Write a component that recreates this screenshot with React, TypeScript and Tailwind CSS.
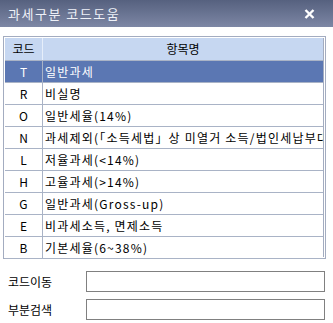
import React from "react";

const rows = [
  { code: "T", name: "일반과세" },
  { code: "R", name: "비실명" },
  { code: "O", name: "일반세율(14%)" },
  { code: "N", name: "과세제외(「소득세법」상 미열거 소득/법인세납부대상)" },
  { code: "L", name: "저율과세(<14%)" },
  { code: "H", name: "고율과세(>14%)" },
  { code: "G", name: "일반과세(Gross-up)" },
  { code: "E", name: "비과세소득, 면제소득" },
  { code: "B", name: "기본세율(6~38%)" },
];

function CodeRow({ code, name, selected }: { code: string; name: string; selected: boolean }) {
  return (
    <div
      className={
        selected
          ? "flex h-[22px] items-center border-b border-[#a9b3c6] bg-[#5b77b3] text-white"
          : "flex h-[22px] items-center border-b border-[#a9b3c6] bg-white text-black"
      }
    >
      <div className="flex h-full w-[38px] shrink-0 items-center justify-center border-r border-[#a9b3c6]">
        {code}
      </div>
      <div className="min-w-0 flex-1 overflow-hidden whitespace-nowrap pl-[2px] leading-[21px] tracking-[1.2px]">
        {name}
      </div>
    </div>
  );
}

export default function App() {
  return (
    <div
      className="h-[323px] w-[333px] overflow-hidden bg-white text-[12px] leading-none"
      style={{ fontFamily: '"Noto Sans CJK KR", "Liberation Sans", sans-serif' }}
    >
      {/* title bar */}
      <div className="flex h-[27px] items-center justify-between bg-gradient-to-b from-[#56617f] to-[#7d87a5] pl-[8px] pr-[18px]">
        <span className="text-[13px] tracking-[1.5px] text-[#eef1f8]">과세구분 코드도움</span>
        <svg width="11" height="10" viewBox="0 0 11 10">
          <path d="M1.5 1 L9.5 9 M9.5 1 L1.5 9" stroke="white" strokeWidth="2.4" />
        </svg>
      </div>

      {/* code list */}
      <div className="mx-[3px] mt-[9px] h-[223px] w-[323px] border border-[#a3acc0] p-px">
        <div className="h-full border-r border-b border-[#a3acc0]">
          <div className="flex h-[23px] items-center border-b border-[#a9b3c6] bg-[#c6d7f1] text-black">
            <div className="flex h-full w-[38px] shrink-0 items-center justify-center border-r border-[#e6eefa]">코드</div>
            <div className="flex-1 text-center">항목명</div>
          </div>
          {rows.map((r, i) => (
            <CodeRow key={r.code} code={r.code} name={r.name} selected={i === 0} />
          ))}
        </div>
      </div>

      {/* search fields */}
      <div className="mt-[12px] flex flex-col gap-[7px] pl-[8px] pr-[8px]">
        <div className="flex items-center">
          <span className="w-[78px] text-black">코드이동</span>
          <div className="h-[21px] flex-1 border border-[#808080] bg-white" />
        </div>
        <div className="flex items-center">
          <span className="w-[78px] text-black">부분검색</span>
          <div className="h-[21px] flex-1 border border-[#808080] bg-white" />
        </div>
      </div>
    </div>
  );
}
